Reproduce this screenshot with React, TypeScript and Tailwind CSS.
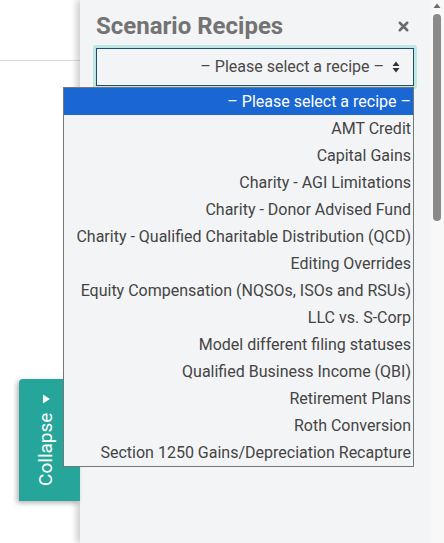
import { X } from 'lucide-react';

const recipes = [
  'AMT Credit',
  'Capital Gains',
  'Charity - AGI Limitations',
  'Charity - Donor Advised Fund',
  'Charity - Qualified Charitable Distribution (QCD)',
  'Editing Overrides',
  'Equity Compensation (NQSOs, ISOs and RSUs)',
  'LLC vs. S-Corp',
  'Model different filing statuses',
  'Qualified Business Income (QBI)',
  'Retirement Plans',
  'Roth Conversion',
  'Section 1250 Gains/Depreciation Recapture',
];

export default function App() {
  return (
    <div className="relative flex h-[543px] w-[444px] overflow-hidden bg-white font-['Roboto',sans-serif]">
      <div className="w-[80px] shrink-0">
        <div className="h-[61px] border-b border-[#dcdcdc]" />
      </div>

      <div className="relative z-10 flex w-[350px] shrink-0 flex-col bg-[#f3f4f6] px-4 shadow-[-4px_0_6px_rgba(0,0,0,0.18)]">
        <div className="flex items-center justify-between pt-[10px]">
          <h2 className="text-[24px] font-bold leading-[33px] text-[#737373]">Scenario Recipes</h2>
          <X size={15} strokeWidth={4} className="mr-[3px] text-[#6b6b6b]" />
        </div>
        <div className="mt-[5px] rounded-[1px] ring-[3px] ring-[#bfe6e2]">
          <div className="flex h-[38px] items-center justify-end gap-[8px] border border-[#1d4f6a] bg-[#f3f4f6] pr-[13px] text-[16px] text-[#4a4a4a]">
            <span>– Please select a recipe –</span>
            <svg width="8" height="12" viewBox="0 0 8 12" className="text-[#333]">
              <path d="M4 0.5L7.5 5H0.5z M4 11.5L7.5 7H0.5z" fill="currentColor" />
            </svg>
          </div>
        </div>
      </div>

      <div className="relative w-[14px] shrink-0 bg-[#f8f8f8]">
        <svg width="10" height="8" viewBox="0 0 10 8" className="absolute left-[2px] top-[2px]">
          <path d="M5 1.5L8.5 6H1.5z" fill="#6b6b6b" />
        </svg>
        <div className="absolute left-[3px] top-[14px] h-[207px] w-[8px] rounded-full bg-[#8a8a8a]" />
      </div>

      <div className="absolute left-[19px] top-[379px] z-10 flex h-[122px] w-[61px] items-center justify-center rounded-tl-[4px] bg-[#26a69a] shadow-[-2px_2px_5px_rgba(0,0,0,0.3)]">
        <div className="-ml-[5px] flex -rotate-90 items-center gap-[10px] whitespace-nowrap text-[19px] text-white">
          <span>Collapse</span>
          <svg width="8" height="10" viewBox="0 0 8 10" className="rotate-90">
            <path d="M0.5 0.5L7.5 5L0.5 9.5z" fill="white" />
          </svg>
        </div>
      </div>

      <ul className="absolute left-[63px] top-[87px] z-20 w-[351px] border border-[#767676] bg-[#f3f4f6] text-right text-[16px] text-[#444]">
        <li className="h-[27px] bg-[#1a66d2] pr-[2px] leading-[27px] text-white">– Please select a recipe –</li>
        {recipes.map((r) => (
          <li key={r} className="h-[27px] pr-[2px] leading-[27px]">{r}</li>
        ))}
      </ul>
    </div>
  );
}
